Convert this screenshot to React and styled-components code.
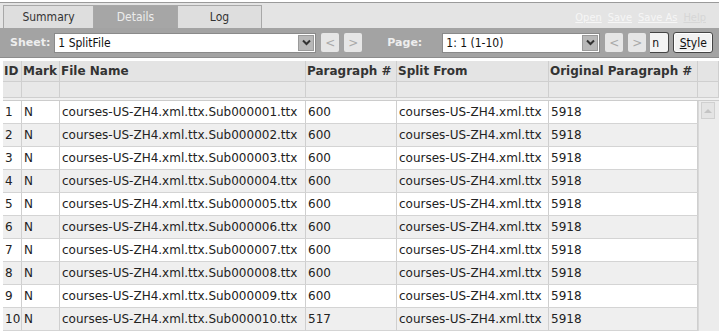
import React from 'react'
import styled, { createGlobalStyle } from 'styled-components'

const GlobalStyle = createGlobalStyle`
  body {
    margin: 0;
    background: #ffffff;
    font-family: "DejaVu Sans", Verdana, sans-serif;
  }
`

const Page = styled.div`
  width: 719px;
  height: 334px;
  overflow: hidden;
  background: #ffffff;
`

const TabBar = styled.div`
  height: 25px;
  margin-top: 2px;
  border-top: 1px solid #9a9a9a;
  background: #e4e4e4;
  display: flex;
  align-items: flex-end;
  padding-left: 3px;
`

const Tab = styled.div`
  width: ${(p) => p.$w}px;
  height: 23px;
  box-sizing: border-box;
  border: 1px solid #a8a8a8;
  border-bottom: none;
  border-left: ${(p) => (p.$first ? '1px solid #a8a8a8' : 'none')};
  background: ${(p) => (p.$active ? '#a6a6a6' : '#dedede')};
  color: ${(p) => (p.$active ? '#ececec' : '#333')};
  font-family: "DejaVu Sans Condensed", "DejaVu Sans", sans-serif;
  font-size: 12px;
  display: flex;
  align-items: center;
  justify-content: center;
`

const Links = styled.div`
  margin-left: auto;
  margin-right: 13px;
  align-self: center;
  margin-top: 4px;
  display: flex;
  gap: 6px;
  font-family: "DejaVu Sans Condensed", "DejaVu Sans", sans-serif;
  font-size: 11px;
`

const LinkItem = styled.span`
  color: ${(p) => (p.$dim ? '#d6d6d6' : '#f6f6f6')};
  text-decoration: underline;
`

const Toolbar = styled.div`
  height: 29px;
  background: #a3a3a3;
  display: flex;
  align-items: center;
  padding-left: 10px;
  border-bottom: 1px solid #8c8c8c;
`

const Label = styled.span`
  color: #eeeeee;
  font-weight: bold;
  font-size: 11px;
  margin-right: 4px;
`

const Select = styled.div`
  width: ${(p) => p.$w}px;
  height: 20px;
  box-sizing: border-box;
  background: #fff;
  border: 1px solid #8a8a8a;
  display: flex;
  align-items: center;
  font-size: 12px;
  color: #111;
  padding-left: 3px;
  font-family: "DejaVu Sans Condensed", "DejaVu Sans", sans-serif;
`

const SelectText = styled.span`
  flex: 1;
`

const Drop = styled.div`
  width: 16px;
  height: 16px;
  margin-right: 1px;
  background: #b8b8b8;
  border: 1px solid #9a9a9a;
  box-sizing: border-box;
  display: flex;
  align-items: center;
  justify-content: center;
`

const NavBtn = styled.div`
  width: 18px;
  height: 19px;
  margin-left: 5px;
  background: #e6e6e6;
  border-radius: 2px;
  color: #aaaaaa;
  font-size: 12px;
  display: flex;
  align-items: center;
  justify-content: center;
  font-family: "DejaVu Sans", sans-serif;
`

const Spacer = styled.div`
  width: ${(p) => p.$w}px;
`

const ClipBtn = styled.div`
  width: 19px;
  height: 21px;
  box-sizing: border-box;
  margin-left: 4px;
  padding-left: 2px;
  background: #f4f4f4;
  border: 1px solid #444;
  border-left: none;
  border-radius: 0 3px 3px 0;
  font-size: 12px;
  font-family: "DejaVu Sans Condensed", "DejaVu Sans", sans-serif;
  display: flex;
  align-items: center;
  color: #111;
`

const StyleBtn = styled.div`
  width: 40px;
  height: 21px;
  box-sizing: border-box;
  margin-left: 4px;
  background: #f2f2f2;
  border: 1px solid #444;
  border-radius: 3px;
  font-size: 12px;
  font-family: "DejaVu Sans Condensed", "DejaVu Sans", sans-serif;
  display: flex;
  align-items: center;
  justify-content: center;
  color: #111;
  box-shadow: inset 0 0 0 1px #fff;
`

const Grid = styled.div`
  display: grid;
  grid-template-columns: 19px 38px 246px 91px 152px 149px 21px;
  margin-top: 3px;
  margin-left: 3px;
  font-size: 12px;
  color: #222;
`

const HeadCell = styled.div`
  height: 20px;
  background: #e4e4e4;
  border-right: 1px solid #cfcfcf;
  border-bottom: 1px solid #cfcfcf;
  font-weight: bold;
  color: #333;
  display: flex;
  align-items: center;
  padding-left: 1px;
  white-space: nowrap;
  overflow: hidden;
`

const FilterCell = styled.div`
  height: 15px;
  background: #e8e8e8;
  border-right: 1px solid #cfcfcf;
  border-bottom: 1px solid #cfcfcf;
`

const Gap = styled.div`
  grid-column: 1 / -1;
  height: 2px;
  background: #f0f0f0;
  border-bottom: 1px solid #cccccc;
`

const Cell = styled.div`
  height: 22px;
  background: ${(p) => (p.$alt ? '#efefef' : '#ffffff')};
  border-right: 1px solid #cfcfcf;
  border-bottom: 1px solid #d4d4d4;
  display: flex;
  align-items: center;
  padding-left: 2px;
  white-space: nowrap;
  overflow: hidden;
`

const Scroll = styled.div`
  grid-column: 7;
  grid-row: 4 / span 10;
  background: #ececec;
  border-left: 1px solid #d8d8d8;
  padding: 1px 2px;
`

const ScrollUp = styled.div`
  width: 14px;
  height: 17px;
  background: #e4e4e4;
  border: 1px solid #d0d0d0;
  box-sizing: border-box;
  display: flex;
  align-items: center;
  justify-content: center;
`

const headers = ['ID', 'Mark', 'File Name', 'Paragraph #', 'Split From', 'Original Paragraph #', '']

const rows = Array.from({ length: 10 }, (_, i) => ({
  id: i + 1,
  file: `courses-US-ZH4.xml.ttx.Sub${String(i + 1).padStart(6, '0')}.ttx`,
  para: i === 9 ? 517 : 600,
}))

const Chevron = () => (
  <svg width="9" height="7" viewBox="0 0 9 7">
    <path d="M1 1.5 L4.5 5 L8 1.5" stroke="#333" strokeWidth="2" fill="none" />
  </svg>
)

function App() {
  return (
    <Page>
      <GlobalStyle />
      <TabBar>
        <Tab $w={91} $first>Summary</Tab>
        <Tab $w={84} $active>Details</Tab>
        <Tab $w={84}>Log</Tab>
        <Links>
          <LinkItem>Open</LinkItem>
          <LinkItem>Save</LinkItem>
          <LinkItem>Save As</LinkItem>
          <LinkItem $dim>Help</LinkItem>
        </Links>
      </TabBar>
      <Toolbar>
        <Label>Sheet:</Label>
        <Select $w={262}>
          <SelectText>1 SplitFile</SelectText>
          <Drop><Chevron /></Drop>
        </Select>
        <NavBtn>&lt;</NavBtn>
        <NavBtn>&gt;</NavBtn>
        <Spacer $w={25} />
        <Label>Page:</Label>
        <Spacer $w={16} />
        <Select $w={158}>
          <SelectText>1: 1 (1-10)</SelectText>
          <Drop><Chevron /></Drop>
        </Select>
        <NavBtn>&lt;</NavBtn>
        <NavBtn>&gt;</NavBtn>
        <ClipBtn>n</ClipBtn>
        <StyleBtn><span><u>S</u>tyle</span></StyleBtn>
      </Toolbar>
      <Grid>
        {headers.map((h, i) => (
          <HeadCell key={`h${i}`}>{h}</HeadCell>
        ))}
        {headers.map((h, i) => (
          <FilterCell key={`f${i}`} />
        ))}
        <Gap />
        {rows.map((r, i) => (
          <React.Fragment key={r.id}>
            <Cell $alt={i % 2 === 1}>{r.id}</Cell>
            <Cell $alt={i % 2 === 1}>N</Cell>
            <Cell $alt={i % 2 === 1}>{r.file}</Cell>
            <Cell $alt={i % 2 === 1}>{r.para}</Cell>
            <Cell $alt={i % 2 === 1}>courses-US-ZH4.xml.ttx</Cell>
            <Cell $alt={i % 2 === 1}>5918</Cell>
          </React.Fragment>
        ))}
        <Scroll>
          <ScrollUp>
            <svg width="8" height="5" viewBox="0 0 8 5">
              <path d="M0 5 L4 1 L8 5 Z" fill="#c4c4c4" />
            </svg>
          </ScrollUp>
        </Scroll>
      </Grid>
    </Page>
  )
}

export default App
